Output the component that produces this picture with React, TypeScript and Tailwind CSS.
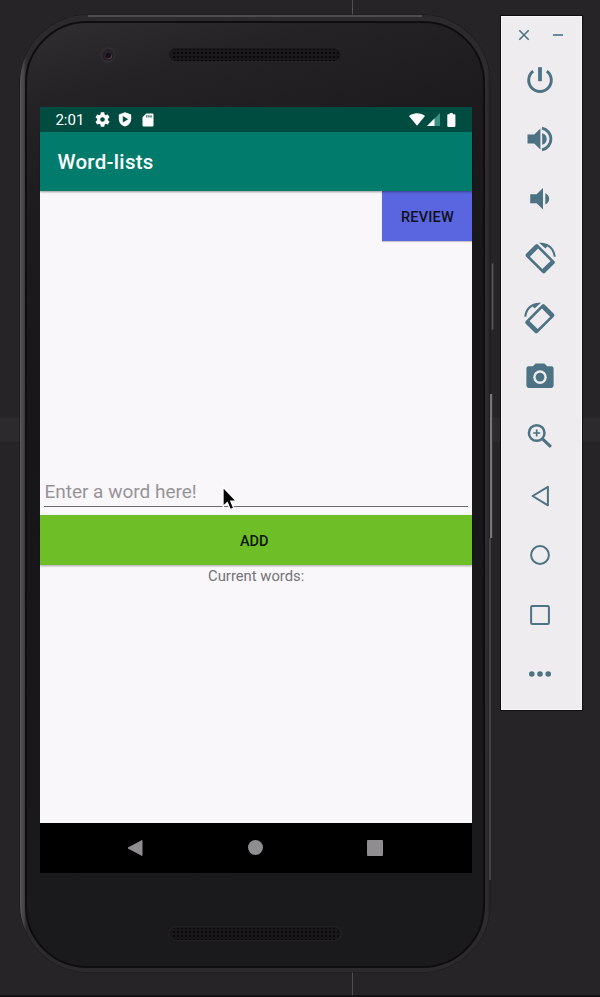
import React from "react";

const INK = "#4d7284";

function Glyph({ children }: { children: React.ReactNode }) {
  return (
    <div className="flex h-[59.4px] items-center justify-center pr-[3px]">
      <svg width="36" height="36" viewBox="-18 -18 36 36" fill={INK}>
        {children}
      </svg>
    </div>
  );
}

function RotateShape() {
  return (
    <g>
      <path
        transform="translate(.2 .8) rotate(45)"
        fillRule="evenodd"
        d="M-11.400 -8.400h22.800a2 2 0 0 1 2 2v12.800a2 2 0 0 1 -2 2h-22.800a2 2 0 0 1 -2 -2v-12.800a2 2 0 0 1 2 -2zM-8.800 -5.800v11.600h17.600v-11.600z"
      />
      <path d="M-1 -15.2C8 -16.1 15 -10.500 15.700 -1.200H13.700C13.200 -6 11 -9.600 7.300 -11.500L5.400 -9.600Z" />
    </g>
  );
}

function Toolbar() {
  return (
    <aside className="mt-[15px] h-[696px] w-[83px] shrink-0 border border-[#0d0c0e] bg-[#eeecee] shadow-[inset_0_0_0_1px_#faf9fa]">
      <div className="flex h-[34.3px] items-center justify-between pl-[17px] pr-[18px] pt-[4px]">
        <svg width="12" height="12" viewBox="0 0 12 12" stroke={INK} strokeWidth="1.6">
          <path d="M1.300 1.300l9.400 9.400M10.700 1.300l-9.400 9.400" />
        </svg>
        <svg width="12" height="12" viewBox="0 0 12 12" stroke={INK} strokeWidth="1.600">
          <path d="M1 6h10" />
        </svg>
      </div>
      <Glyph>
        <path d="M-1.900 -12.800h3.800v14h-3.800z" />
        <path d="M-6.800 -9A11.300 11.300 0 1 0 6.800 -9" transform="translate(0 .2)" fill="none" stroke={INK} strokeWidth="2.900" />
      </Glyph>
      <Glyph>
        <path d="M-12.500 -4.600h6.800L.4 -10.600v21.200L-5.700 4.600h-6.800zM2.200 -5.800a6 6 0 0 1 0 11.600z" />
        <path d="M2 -10.800a11 11 0 0 1 0 21.600" fill="none" stroke={INK} strokeWidth="2.900" />
      </Glyph>
      <Glyph>
        <path d="M-9.800 -4.700h6.400L3 -10.900v21.400L-3.400 4.300h-6.400zM5.300 -5.800a6 6 0 0 1 0 11.200z" />
      </Glyph>
      <Glyph>
        <RotateShape />
      </Glyph>
      <Glyph>
        <g transform="scale(-1 1)">
          <RotateShape />
        </g>
      </Glyph>
      <Glyph>
        <path
          fillRule="evenodd"
          d="M-4.500 -13.500h9l2.600 2.800h4.200a2.300 2.300 0 0 1 2.300 2.300v17a2.300 2.300 0 0 1 -2.300 2.300h-22.600a2.300 2.300 0 0 1 -2.300 -2.300v-17a2.300 2.300 0 0 1 2.300 -2.300h4.200zM0 -6.700a6.800 6.800 0 1 0 0 13.600a6.800 6.800 0 1 0 0 -13.600z"
        />
        <circle cx="0" cy=".1" r="4.400" />
      </Glyph>
      <Glyph>
        <circle cx="-3.300" cy="-3" r="7.800" fill="none" stroke={INK} strokeWidth="2.500" />
        <path d="M2.500 2.800L10.900 10.900" stroke={INK} strokeWidth="3" />
        <path d="M-6.800 -3h7M-3.300 -6.500v7" stroke={INK} strokeWidth="1.700" />
      </Glyph>
      <Glyph>
        <path d="M7.900 -9.200v18.500L-7.400 0z" fill="none" stroke={INK} strokeWidth="2" strokeLinejoin="round" />
      </Glyph>
      <Glyph>
        <circle r="8.900" fill="none" stroke={INK} strokeWidth="2" />
      </Glyph>
      <Glyph>
        <rect x="-8.900" y="-8.900" width="17.800" height="17.800" rx="1.500" fill="none" stroke={INK} strokeWidth="2" />
      </Glyph>
      <Glyph>
        <circle cx="-8.200" r="2.800" />
        <circle r="2.800" />
        <circle cx="8.200" r="2.800" />
      </Glyph>
    </aside>
  );
}

function Speaker() {
  return (
    <svg width="174" height="16" viewBox="0 0 174 16">
      <defs>
        <pattern id="mesh" width="4" height="4" patternUnits="userSpaceOnUse">
          <circle cx="2" cy="2" r="1" fill="#030303" />
        </pattern>
      </defs>
      <rect x=".7" y=".7" width="172.600" height="14" rx="7" fill="#19171a" stroke="#2a282b" strokeWidth=".7" />
      <rect x="3" y="2" width="168" height="12" rx="5" fill="url(#mesh)" />
    </svg>
  );
}

function StatusBar() {
  return (
    <div className="flex h-[25px] items-center bg-[#004c40] pl-[15px] pr-[15.500px] text-white">
      <span className="w-[40px] pt-[2px] text-[15px] leading-none">2:01</span>
      <svg width="15" height="15" viewBox="2 2 20 20" fill="white">
        <path d="M19.140 12.940a7 7 0 0 0 0-1.880l2.030-1.580a.5.5 0 0 0 .12-.61l-1.920-3.320a.5.5 0 0 0-.59-.22l-2.390.96a7 7 0 0 0-1.620-.94l-.36-2.540a.5.500 0 0 0-.48-.41h-3.840a.5.500 0 0 0-.47.41l-.36 2.540a7 7 0 0 0-1.620.94l-2.390-.96a.5.500 0 0 0-.59.22L2.740 8.870a.5.500 0 0 0 .12.610l2.030 1.580a7 7 0 0 0 0 1.880l-2.030 1.580a.5.500 0 0 0-.12.610l1.920 3.320c.12.220.37.290.59.220l2.390-.96a7 7 0 0 0 1.620.94l.36 2.540c.05.240.24.410.48.410h3.840c.24 0 .44-.17.470-.41l.36-2.540a7 7 0 0 0 1.620-.94l2.390.96c.22.080.47 0 .59-.22l1.920-3.320a.5.500 0 0 0-.12-.61zM12 15.100a3.100 3.100 0 1 1 0-6.200 3.100 3.100 0 0 1 0 6.200z" />
      </svg>
      <svg className="ml-[8px]" width="14" height="15" viewBox="0 0 14 15">
        <path fill="white" fillRule="evenodd" d="M7 .3L13.200 2.600V7C13.200 10.500 10.500 13.500 7 14.600C3.500 13.500 .8 10.500 .8 7V2.600zM4.800 3.900v6.600L10.200 7.200z" />
      </svg>
      <svg className="ml-[10px]" width="12" height="14" viewBox="0 0 12 14">
        <path fill="white" fillRule="evenodd" d="M4.200 .6H10.300a1.200 1.200 0 0 1 1.200 1.200v10.400a1.200 1.200 0 0 1-1.200 1.200H1.700a1.200 1.200 0 0 1-1.200-1.200V4.300zM4.300 2.200v2.200h1.100V2.200zM6.400 2.200v2.200h1.100V2.200zM8.500 2.200v2.200h1.100V2.200z" />
      </svg>
      <svg className="ml-auto" width="16" height="13" viewBox="0 0 16 13">
        <path fill="white" d="M0 3C4.500 -.7 11.500 -.7 16 3L8 12.800z" />
      </svg>
      <svg className="ml-[2px]" width="13" height="13" viewBox="0 0 13 13">
        <path fill="#3b8f80" d="M0 13L13 0v13z" />
        <path fill="white" d="M0 13L7.500 5.500V13z" />
      </svg>
      <svg className="ml-[7px]" width="9" height="14" viewBox="0 0 9 14">
        <path fill="white" d="M2.700 0h3v1.300H7.600a.8.800 0 0 1 .8.800v11a.8.800 0 0 1-.8.800H1.100a.8.800 0 0 1-.8-.8v-11a.8.800 0 0 1 .8-.8h1.600z" />
      </svg>
    </div>
  );
}

function Screen() {
  return (
    <div className="ml-[13.400px] flex h-[766px] w-[431.600px] flex-col bg-[#f9f7fa]">
      <StatusBar />
      <header className="z-10 flex h-[58.500px] items-center bg-[#007b6c] pl-[17px] pt-[3px] text-[20.500px] font-medium tracking-[0.300px] text-white shadow-[0_1px_2px_rgba(0,0,0,0.4)]">
        Word-lists
      </header>
      <main className="flex h-[632px] flex-col">
        <button className="h-[50.500px] w-[90px] self-end bg-[#5a66df] pl-px pt-[4px] text-[14.500px] font-medium tracking-[0.200px] text-[#111018] shadow-[0_1px_1px_rgba(0,0,0,0.2)]">
          REVIEW
        </button>
        <div className="relative mx-1 mt-[234px] h-[32px] border-b border-[#6b696d] text-[19px] leading-[34px] text-[#969498]">
          Enter a word here!
          <svg className="absolute left-[176.500px] top-[11px]" width="18" height="28" viewBox="-2 -1 18 28">
            <path
              d="M0 0V19.500L4.300 15.500L7.300 22.500L10.700 21L7.800 14.200H13.500z"
              fill="black"
              stroke="white"
              strokeWidth="1.300"
            />
          </svg>
        </div>
        <button className="mt-[8px] h-[50px] bg-[#6ebe28] pr-[4px] pt-[4px] text-[14.500px] font-medium text-[#101507] shadow-[0_1px_2px_rgba(0,0,0,0.35)]">
          ADD
        </button>
        <p className="pt-[2px] text-center text-[14.800px] leading-[18px] text-[#747276]">Current words:</p>
      </main>
      <nav className="flex h-[50.500px] items-center justify-between bg-black pl-[87px] pr-[89px]">
        <svg width="16" height="18" viewBox="0 0 16 18">
          <path d="M15 1.500v15L1 9z" fill="#8f8d90" stroke="#8f8d90" strokeLinejoin="round" />
        </svg>
        <span className="size-[15px] rounded-full bg-[#8f8d90]" />
        <span className="size-4 rounded-[1px] bg-[#8f8d90]" />
      </nav>
    </div>
  );
}

function Phone() {
  return (
    <div className="relative mt-[15px] h-[957px] w-[470px] shrink-0 rounded-[68px] bg-[linear-gradient(90deg,#575558_0px,#444245_4px,#2c2a2d_6px,#2c2a2d_462px,#2f2d30_467px,#222023_470px)] shadow-[0_0_0_0.5px_#18161a] before:absolute before:inset-x-[68px] before:top-0 before:h-[2px] before:bg-[#4e4c4f]">
      <span className="absolute left-[471px] top-[248px] h-[67px] w-[3px] border border-[#39373a] bg-[#565457]" />
      <span className="absolute left-[470px] top-[379px] h-[144px] w-[3px] border-r border-[#343235] bg-[#777578]" />
      <span className="absolute left-[469px] top-[523px] h-[342px] w-[2px] bg-[#434144]" />
      <div className="absolute inset-x-[5px] bottom-[4px] top-[6px] flex flex-col rounded-[62px] border-2 border-[#0e0d0f] bg-[linear-gradient(165deg,#302e31_0%,#242225_8%,#1d1b1e_18%,#161517_40%,#1a191b_85%,#1a191b_100%)]">
        <div className="relative flex h-[84px] justify-center pt-[24px]">
          <span className="absolute left-[73px] top-[24px] flex size-[16px] items-center justify-center rounded-full border-2 border-[#302c2f] bg-[#252126]">
            <span className="size-[5px] rounded-full bg-[#111017] shadow-[1px_1px_0_#514047]" />
          </span>
          <Speaker />
        </div>
        <Screen />
        <div className="flex justify-center pt-[53px]">
          <Speaker />
        </div>
      </div>
    </div>
  );
}

export default function App() {
  return (
    <div className="relative flex h-[997px] w-[600px] gap-[10px] overflow-hidden border-b-2 border-[#151316] bg-[#262427] pl-[20px] font-['Roboto','Liberation_Sans',sans-serif]">
      <span className="absolute inset-x-0 top-[418px] h-[24px] bg-[#2c2a2d]" />
      <span className="absolute inset-y-0 left-[352px] w-px bg-[#525053]" />
      <Phone />
      <div className="relative">
        <Toolbar />
      </div>
    </div>
  );
}
